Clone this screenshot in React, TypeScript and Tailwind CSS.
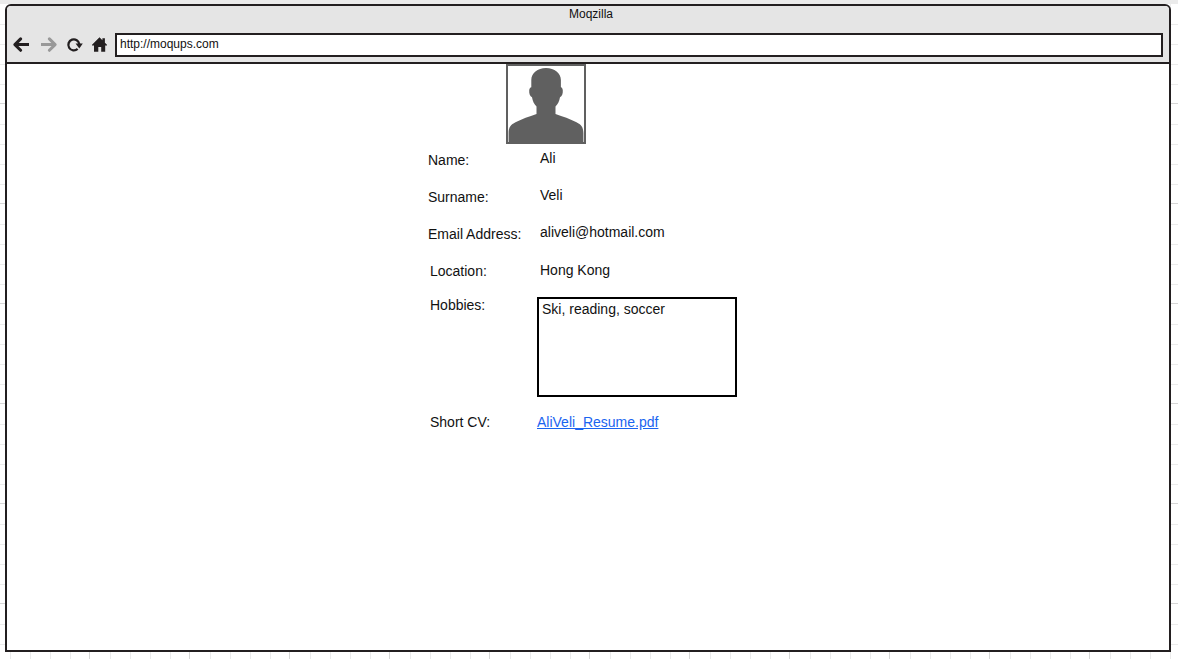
import React from "react";

const gridBackground =
  "bg-white bg-[linear-gradient(#ebebeb_0_4px,transparent_4px),linear-gradient(#d6d6d6_0_1px,transparent_1px_21px,#ebebeb_21px_22px,transparent_22px_41px,#ebebeb_41px_42px,transparent_42px_61px,#ebebeb_61px_62px,transparent_62px_81px,#ebebeb_81px_82px,transparent_82px),linear-gradient(to_right,#d6d6d6_0_1px,transparent_1px_21px,#ebebeb_21px_22px,transparent_22px_41px,#ebebeb_41px_42px,transparent_42px_61px,#ebebeb_61px_62px,transparent_62px_81px,#ebebeb_81px_82px,transparent_82px)] bg-[size:100%_100%,100px_100px,100px_100px] bg-[position:0_0,0_3px,-11px_0]";

function BackIcon() {
  return (
    <svg viewBox="0 0 17 16" className="h-4 w-[17px]" fill="none" stroke="currentColor" strokeWidth="3" aria-hidden="true">
      <path d="M2.5 7.6H16" />
      <path d="M7.6 1.900 1.900 7.600 7.600 13.300" strokeLinecap="round" strokeLinejoin="round" />
    </svg>
  );
}

function ForwardIcon() {
  return (
    <svg viewBox="0 0 17 16" className="h-4 w-[17px]" fill="none" stroke="currentColor" strokeWidth="3" aria-hidden="true">
      <path d="M1 7.6H14.500" />
      <path d="M9.400 1.900 15.100 7.600 9.400 13.300" strokeLinecap="round" strokeLinejoin="round" />
    </svg>
  );
}

function ReloadIcon() {
  return (
    <svg viewBox="0 0 15 16" className="h-4 w-[15px] overflow-visible" aria-hidden="true">
      <path d="M10.600 11.900A5.500 5.500 0 1 1 12.300 7.200" fill="none" stroke="currentColor" strokeWidth="2.3" />
      <path d="M8.600 6.500H15.800L12.300 11.400Z" fill="currentColor" />
    </svg>
  );
}

function HomeIcon() {
  return (
    <svg viewBox="0 0 15 16" className="h-4 w-[15px]" fill="currentColor" aria-hidden="true">
      <path d="M7.500.3 10.400 3.200V1.300H12.900V5.700L15 7.800V8.600H13.200V14.700H9.200V9.900H6.300V14.700H2V8.600H0V7.800Z" />
    </svg>
  );
}

function Avatar() {
  return (
    <svg viewBox="0 0 80 80" className="ml-[78px] h-20 w-20" role="img" aria-label="Profile picture">
      <rect x="1" y="1" width="78" height="78" fill="#fff" stroke="#606060" strokeWidth="2" />
      <path
        fill="#606060"
        d="M2.600 79V69C2.600 63 5 60.500 9.500 58.200C16 55 23 52.500 30.500 50V42.500C28 40 26.700 37 26 33.200C24 32.500 23 29.500 23.200 26.500C23.300 24.500 24.200 23.500 25.300 23.200V16C25.300 9 31.500 4 40 4C48.500 4 54.900 9 54.900 16V23.200C55.900 23.500 56.700 24.500 56.800 26.500C57 29.500 56 32.500 54 33.200C53.300 37 52 40 49.500 42.500V50C57 52.500 64 55 70.500 58.200C75 60.500 77.400 63 77.400 69V79Z"
      />
    </svg>
  );
}

const personal = [
  { label: "Name:", value: "Ali" },
  { label: "Surname:", value: "Veli" },
  { label: "Email Address:", value: "aliveli@hotmail.com" },
];

export default function App() {
  return (
    <div className={`flex min-h-screen flex-col pt-1 pr-[7px] pb-[7px] pl-[5px] font-['Liberation_Sans',Arial,sans-serif] text-[#111] ${gridBackground}`}>
      <div className="flex flex-1 flex-col overflow-hidden rounded-t-md border-2 border-[#231f20] bg-white">
        <header className="border-b-2 border-[#231f20] bg-[#e5e5e5] pb-[5px]">
          <h1 className="pl-1.5 text-center text-xs leading-4">Moqzilla</h1>
          <div className="mt-[11px] flex items-center pr-1.5 pl-1.5">
            <nav className="flex items-center gap-2.5 pr-2 text-[#231f20]" aria-label="Browser">
              <button type="button" aria-label="Back"><BackIcon /></button>
              <button type="button" aria-label="Forward" className="text-[#999]"><ForwardIcon /></button>
              <button type="button" aria-label="Reload"><ReloadIcon /></button>
              <button type="button" aria-label="Home"><HomeIcon /></button>
            </nav>
            <input
              type="text"
              aria-label="Address"
              defaultValue="http://moqups.com"
              className="h-6 min-w-0 flex-1 border-2 border-[#231f20] bg-white px-[3px] pb-0.5 text-xs leading-4 outline-none"
            />
          </div>
        </header>

        <main className="mx-auto w-80 text-sm leading-5">
          <Avatar />
          <dl className="mt-1.5">
            {personal.map((row) => (
              <div key={row.label} className="flex h-[37px]">
                <dt className="w-28">{row.label}</dt>
                <dd className="leading-4">{row.value}</dd>
              </div>
            ))}
          </dl>
          <div className="pl-0.5">
            <dl className="flex h-[34px]">
              <dt className="w-[110px]">Location:</dt>
              <dd className="leading-[18px]">Hong Kong</dd>
            </dl>
            <div className="flex">
              <label htmlFor="hobbies" className="w-[107px]">Hobbies:</label>
              <textarea
                id="hobbies"
                defaultValue="Ski, reading, soccer"
                className="mt-0.5 h-[100px] w-[200px] resize-none border-2 border-black bg-white px-[3px] leading-5 outline-none"
              />
            </div>
            <dl className="mt-[15px] flex">
              <dt className="w-[107px]">Short CV:</dt>
              <dd>
                <a href="#resume" className="text-[#1a64f0] underline">AliVeli_Resume.pdf</a>
              </dd>
            </dl>
          </div>
        </main>
      </div>
    </div>
  );
}
